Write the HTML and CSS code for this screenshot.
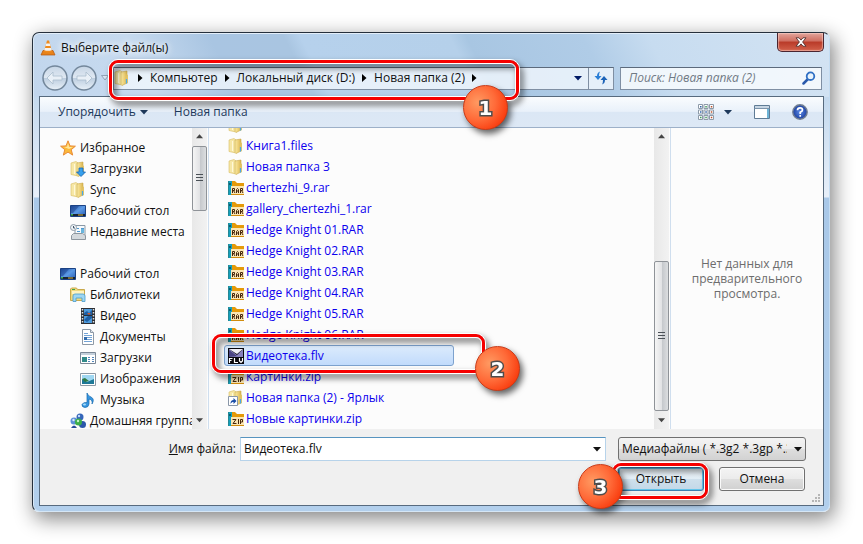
FILE: index.html
```html
<!DOCTYPE html>
<html lang="ru">
<head>
<meta charset="utf-8">
<title>Выберите файл(ы)</title>
<link rel="stylesheet" href="styles.css">
</head>
<body>
<svg class="defs" aria-hidden="true">
  <defs>
    <linearGradient id="gold" x1="0" x2="1" y1="0" y2="0"><stop offset="0" stop-color="#f8e9a4"/><stop offset=".5" stop-color="#eed27a"/><stop offset="1" stop-color="#d9b450"/></linearGradient>
    <linearGradient id="screen" x1="0" x2="1" y1="0" y2="1"><stop offset="0" stop-color="#1d4c9c"/><stop offset=".5" stop-color="#5c9ae6"/><stop offset="1" stop-color="#2459b0"/></linearGradient>
    <linearGradient id="disc" x1="0" x2="0" y1="0" y2="1"><stop offset="0" stop-color="#c6d5e5"/><stop offset=".48" stop-color="#dfe8f2"/><stop offset=".5" stop-color="#bccddf"/><stop offset="1" stop-color="#e9f1f8"/></linearGradient>
    <radialGradient id="help"><stop offset="0" stop-color="#5b8ae8"/><stop offset="1" stop-color="#1c3f9e"/></radialGradient>
  </defs>
  <symbol id="i-folder" viewBox="0 0 16 16">
    <path d="M1 2l5-1.500L8 2v13l-7-1.500z" fill="#f6e7a6" stroke="#d8bc62" stroke-width=".6"/>
    <path d="M7 2l6-1v12l-5 2.500-1-1z" fill="url(#gold)" stroke="#c9a748" stroke-width=".6"/>
    <path d="M4.500 3v10" stroke="#fff8d8" stroke-width="1"/><path d="M12.500 4l1.500 1v8l-2 1v-4z" fill="#e3c568"/><path d="M12.500 9v4.500" stroke="#4aa8ea" stroke-width="1.200"/>
  </symbol>
  <symbol id="i-rar" viewBox="0 0 16 16">
    <path d="M0 1h7l2 2h7v4H0z" fill="#e59a09"/><path d="M0 1h4v14H0z" fill="#149fbc"/><path d="M0 1v14" stroke="#46604c" stroke-width=".7"/><circle cx="2" cy="4" r="1" fill="#0a4a5c"/>
    <path d="M3 6h13v9H3z" fill="#fbe6b4"/><path d="M3 14.500h13" stroke="#d08c0e"/>
    <path d="M4.500 13V8.500h2v2h-2m1 0l1.500 2.500M8.500 13V9.500l1-1 1 1V13m-2-2h2M12.500 13V8.500h2v2h-2m1 0l1.500 2.500" fill="none" stroke="#46260c" stroke-width="1"/>
  </symbol>
  <symbol id="i-zip" viewBox="0 0 16 16">
    <path d="M0 1h7l2 2h7v4H0z" fill="#e59a09"/><path d="M0 1h4v14H0z" fill="#149fbc"/><path d="M0 1v14" stroke="#46604c" stroke-width=".7"/><circle cx="2" cy="4" r="1" fill="#0a4a5c"/>
    <path d="M3 6h13v9H3z" fill="#fbe6b4"/><path d="M3 14.500h13" stroke="#d08c0e"/>
    <path d="M4.500 8.500H8L5 12.500h3.500M10.500 8v5M12.500 13V8.500h2V11h-2" fill="none" stroke="#46260c" stroke-width="1"/>
  </symbol>
  <symbol id="i-flv" viewBox="0 0 16 16">
    <path d="M0 0h16v16H0z" fill="#08070d"/><path d="M1 1l8 6 6-6v8H1z" fill="#8781bd"/><path d="M1 1h14L9 6z" fill="#f0eff8"/><path d="M1 2l8 6-8 1z" fill="#4a4484"/>
    <path d="M1.500 15v-4.500h3M1.500 12.500h2M6.500 10v4.500H10M11.500 10v3l1.500 1.500 1.500-1.500v-3" fill="none" stroke="#fff" stroke-width="1.200"/>
  </symbol>
  <symbol id="i-link" viewBox="0 0 16 16">
    <use href="#i-folder"/><path d="M.5 6.500h9v9h-9z" fill="#fff" stroke="#8a97a8"/><path d="M2.500 14c0-3 1-4 3-4V8l3 3-3 3v-2c-1.500 0-2 .5-3 2z" fill="#1c4fa8"/>
  </symbol>
  <symbol id="i-download" viewBox="0 0 16 16">
    <use href="#i-folder"/><path d="M9 7h4v4h2.500L11 15.500 6.500 11H9z" fill="#37a0ec" stroke="#1766b4" stroke-width=".8"/>
  </symbol>
  <symbol id="i-star" viewBox="0 0 16 16">
    <path d="M8 .8l2 5.100 5.400.3-4.200 3.500 1.500 5.400L8 12.100l-4.700 3 1.500-5.400L.6 6.200 6 5.900z" fill="#fbb93a" stroke="#e88a35" stroke-linejoin="round"/><path d="M8 3l1.200 4H13L9 9l-5-2 3-.2z" fill="#ffe69b"/>
  </symbol>
  <symbol id="i-desktop" viewBox="0 0 16 16">
    <path d="M.5 2.500h15v11H.5z" fill="url(#screen)" stroke="#1b4284"/><path d="M1 11h14v2H1z" fill="#1a2433"/><path d="M1 11h2v1.500H1z" fill="#3fb04d"/><path d="M8 12h5" stroke="#d7b23c"/><path d="M1 3l8 0-6 7H1z" fill="#1b3f8c" opacity=".5"/>
  </symbol>
  <symbol id="i-recent" viewBox="0 0 16 16">
    <path d="M5 1.500h10v10H5z" fill="#f6fafd" stroke="#8b99a6"/><path d="M7 4.500h2m2 0h3M7 7.500h3" stroke="#4f97cf"/><path d="M11 5h3v4h-3z" fill="#69b6de"/>
    <path d="M1.500 11.500l2-2h9l3 2v4h-14z" fill="#d4d9dd" stroke="#8e979f"/><circle cx="3.500" cy="3.500" r="3" fill="#eef3f7" stroke="#919da8"/><path d="M3.500 2v2H5" stroke="#415468" fill="none"/>
  </symbol>
  <symbol id="i-library" viewBox="0 0 16 16">
    <path d="M.5 2l1-1h5l1 1.500h7v11H.5z" fill="#f1d97f" stroke="#c9a94c"/><path d="M2 4h12v3H2z" fill="#fff3c0"/><path d="M2 2.500h3" stroke="#3ea24a"/><path d="M3 14.500V9q0-2 2-2h8q2 0 2 2v5.500h-3V11H6v3.500z" fill="#9ed6f2" stroke="#4a9ccc" stroke-width=".8"/>
  </symbol>
  <symbol id="i-video" viewBox="0 0 16 16">
    <path d="M1 0h14v16H1z" fill="#2d2f34"/><path d="M4 1h8v6H4zM4 8h8v7H4z" fill="#4e9bdc"/><path d="M4 5l3-2 2 2 3-3v5H4zM4 12l3 2 5-4v-2H8z" fill="#1d5fa5"/><path d="M7 5l2 2 2-2z" fill="#c95934"/><path d="M2.500 1v14M13.500 1v14" stroke="#dfe3e8" stroke-width="1.500" stroke-dasharray="1.500 1.500"/>
  </symbol>
  <symbol id="i-doc" viewBox="0 0 16 16">
    <path d="M2.500.5h8l3 3v12h-11z" fill="#fff" stroke="#8d99a6"/><path d="M10.500.5v3h3" fill="#dde5ed" stroke="#8d99a6"/><path d="M4 4.500h4m-4 2h8m-5 2h5m-5 2h5m-8 2h8" stroke="#74a4d6"/><path d="M4 8h3v3H4z" fill="#316bad"/>
  </symbol>
  <symbol id="i-window" viewBox="0 0 16 16">
    <path d="M.5 2.500h15v11H.5z" fill="#fff" stroke="#7a8796"/><path d="M1 3h14v2H1z" fill="#c4d0db"/><path d="M2 7h5v5H2z" fill="#318a89"/><path d="M8 7.500h2m-2 2h2m-2 2h2m2-4h2m-2 2h2m-2 2h2" stroke="#5286bc"/>
  </symbol>
  <symbol id="i-image" viewBox="0 0 16 16">
    <path d="M.5 2.500h15v12H.5z" fill="#fff" stroke="#8c99a5"/><path d="M2 4h12v9H2z" fill="#9fd7f2"/><path d="M2 8l5 3 7-3v5H2z" fill="#1d7897"/><path d="M2 8l3-1 4 3-4 1z" fill="#317a45"/>
  </symbol>
  <symbol id="i-music" viewBox="0 0 16 16">
    <path d="M7 1q1 3 4 4 4 2 1 7 1-4-3-5v5q-.5 3.500-4 3.500-3.500-.5-3-3 1-2.500 5-2z" fill="#3796e0" stroke="#1668ad" stroke-width=".7"/><ellipse cx="4.500" cy="12.500" rx="1.500" ry="1" fill="#a6dcfa"/>
  </symbol>
  <symbol id="i-group" viewBox="0 0 16 16">
    <circle cx="10" cy="4" r="3.500" fill="#3566ba"/><circle cx="4" cy="8" r="3.500" fill="#5b91d8"/><circle cx="12.500" cy="11.500" r="3.500" fill="#2c58aa"/><circle cx="8.500" cy="9" r="3.500" fill="#3cae4a"/><path d="M1 15q3-5 6 0z" fill="#244a99"/><circle cx="9" cy="3" r="1.200" fill="#c1dcf8"/><circle cx="3.500" cy="7" r="1.200" fill="#d8eafa"/><circle cx="8" cy="8" r="1.200" fill="#c8f3c9"/>
  </symbol>
  <symbol id="i-down" viewBox="0 0 8 5"><path d="M0 0h8L4 4.500z" fill="currentColor"/></symbol>
  <symbol id="i-up" viewBox="0 0 8 5"><path d="M0 4.500h8L4 0z" fill="currentColor"/></symbol>
  <symbol id="i-right" viewBox="0 0 5 8"><path d="M0 0v8l4.500-4z" fill="currentColor"/></symbol>
</svg>

<main class="window">
  <header class="titlebar">
    <svg class="cone" viewBox="0 0 16 16"><path d="M3 10.500h10l2 4.500H1z" fill="#e88219" stroke="#b4560d" stroke-width=".7"/><path d="M7 .5h2l3 11q-4 2-8 0z" fill="#f08a1c"/><path d="M6.200 3.500h3.600l.7 2.500h-5zM4.900 8h6.200l.6 2.200q-3.700 1.200-7.400 0z" fill="#f6f3ef"/></svg>
    <h1>Выберите файл(ы)</h1>
    <button class="close" aria-label="Закрыть"><svg viewBox="0 0 12 10"><path d="M1 .8h3l2 2.300 2-2.300h3L7.600 5 11 9.200H8L6 6.900 4 9.200H1L4.400 5z" fill="#fff" stroke="#54302e" stroke-width=".9"/></svg></button>
  </header>

  <nav class="navbar" aria-label="Адрес">
    <div class="history">
      <button aria-label="Назад"><svg viewBox="0 0 26 26"><circle cx="13" cy="13" r="12" fill="url(#disc)" stroke="#73879b" stroke-width="1.500"/><path d="M5 13l6-6v4h9v4h-9v4z" fill="#e9f0f7" stroke="#aabccd" stroke-width=".8"/></svg></button>
      <button aria-label="Вперед"><svg viewBox="0 0 26 26"><circle cx="13" cy="13" r="12" fill="url(#disc)" stroke="#73879b" stroke-width="1.500"/><path d="M21 13l-6-6v4H6v4h9v4z" fill="#e9f0f7" stroke="#aabccd" stroke-width=".8"/></svg></button>
      <svg class="recent" viewBox="0 0 8 6"><path d="M.5.500h7L4 5z" fill="#dbe7f3" stroke="#8195aa" stroke-width=".8"/></svg>
    </div>
    <div class="address">
      <svg class="icon"><use href="#i-folder"/></svg>
      <svg class="sep"><use href="#i-right"/></svg><a href="#pc">Компьютер</a>
      <svg class="sep"><use href="#i-right"/></svg><a href="#d">Локальный диск (D:)</a>
      <svg class="sep"><use href="#i-right"/></svg><a href="#folder">Новая папка (2)</a>
      <svg class="sep"><use href="#i-right"/></svg>
      <button class="drop" aria-label="Предыдущие расположения"><svg class="caret"><use href="#i-down"/></svg></button>
      <button class="refresh" aria-label="Обновить"><svg viewBox="0 0 14 14"><path d="M6 .5Q3 1.500 3 5H.5L4 9l3.500-4H5q0-3 1-4.500z" fill="#2b7fd6"/><path d="M8 13.500q3-1 3-4.500h2.500L10 5 6.500 9H9q0 3-1 4.500z" fill="#1c63b8"/></svg></button>
    </div>
    <div class="search">
      <input type="text" placeholder="Поиск: Новая папка (2)" aria-label="Поиск">
      <svg viewBox="0 0 14 14"><path d="M6 8l-4.500 4.500" stroke="#2a59ab" stroke-width="2.500" stroke-linecap="round"/><circle cx="8.500" cy="5.200" r="3.800" fill="#e8f3fc" stroke="#2f6fc4" stroke-width="1.800"/></svg>
    </div>
  </nav>

  <section class="client">
    <div class="toolbar">
      <button>Упорядочить <svg class="caret"><use href="#i-down"/></svg></button>
      <button>Новая папка</button>
      <span class="spacer"></span>
      <button class="view" aria-label="Вид"><svg class="icon" viewBox="0 0 16 16"><g fill="#fff" stroke="#8d9aa8"><path d="M.5.500h4v4h-4zM6 .5h4v4H6zM11.500.500h4v4h-4zM.5 6h4v4h-4zM6 6h4v4H6zM11.500 6h4v4h-4zM.5 11.500h4v4h-4zM6 11.500h4v4H6zM11.500 11.500h4v4h-4z"/></g><path d="M2 2h1.500v1.500H2zM7.300 7.300h1.500v1.500H7.300zM2 7.300h1.500v1.500H2z" fill="#2d62a8"/><path d="M7.300 2h1.500v1.500H7.300zM2 12.800h1.500v1.500H2zM7.300 12.800h1.500v1.500H7.300z" fill="#3b9b58"/><path d="M12.800 2h1.500v1.500h-1.500zM12.800 7.300h1.500v1.500h-1.500zM12.800 12.800h1.500v1.500h-1.500z" fill="#b9502c"/></svg><svg class="caret"><use href="#i-down"/></svg></button>
      <button aria-label="Область просмотра"><svg class="icon" viewBox="0 0 16 16"><path d="M.5 1.500h15v13H.5z" fill="#fff" stroke="#5f7b95"/><path d="M1 2h14v2H1z" fill="#c6d5e3"/><path d="M.5 4.500h15" stroke="#7b93aa"/><path d="M13 5h2v9h-2z" fill="#6eb4d6"/></svg></button>
      <button aria-label="Справка"><svg class="icon" viewBox="0 0 16 16"><circle cx="8" cy="8" r="7.200" fill="url(#help)" stroke="#727f92" stroke-width="1.400"/><path d="M5.500 6.300q0-2.500 2.500-2.500t2.500 2.100Q10.500 7.200 8.200 8.300V10M8.200 11v1.700" fill="none" stroke="#fff" stroke-width="1.700"/></svg></button>
    </div>

    <div class="panes">
      <ul class="tree">
        <li><a href="#fav"><svg class="icon"><use href="#i-star"/></svg>Избранное</a></li>
        <li class="l1"><a href="#dl"><svg class="icon"><use href="#i-download"/></svg>Загрузки</a></li>
        <li class="l1"><a href="#sync"><svg class="icon"><use href="#i-folder"/></svg>Sync</a></li>
        <li class="l1"><a href="#desk"><svg class="icon"><use href="#i-desktop"/></svg>Рабочий стол</a></li>
        <li class="l1"><a href="#recent"><svg class="icon"><use href="#i-recent"/></svg>Недавние места</a></li>
        <li class="group"><a href="#desktop"><svg class="icon"><use href="#i-desktop"/></svg>Рабочий стол</a></li>
        <li class="l1"><a href="#lib"><svg class="icon"><use href="#i-library"/></svg>Библиотеки</a></li>
        <li class="l2"><a href="#video"><svg class="icon"><use href="#i-video"/></svg>Видео</a></li>
        <li class="l2"><a href="#docs"><svg class="icon"><use href="#i-doc"/></svg>Документы</a></li>
        <li class="l2"><a href="#downloads"><svg class="icon"><use href="#i-window"/></svg>Загрузки</a></li>
        <li class="l2"><a href="#images"><svg class="icon"><use href="#i-image"/></svg>Изображения</a></li>
        <li class="l2"><a href="#music"><svg class="icon"><use href="#i-music"/></svg>Музыка</a></li>
        <li class="l1"><a href="#home"><svg class="icon"><use href="#i-group"/></svg>Домашняя группа</a></li>
      </ul>
      <div class="scrollbar"><svg class="arrow"><use href="#i-up"/></svg><div class="track"><div class="thumb"></div></div><svg class="arrow"><use href="#i-down"/></svg></div>

      <div class="files">
        <ul>
          <li><a href="#f0" aria-label="Папка"><svg class="icon"><use href="#i-folder"/></svg></a></li>
          <li><a href="#f1"><svg class="icon"><use href="#i-folder"/></svg>Книга1.files</a></li>
          <li><a href="#f2"><svg class="icon"><use href="#i-folder"/></svg>Новая папка 3</a></li>
          <li><a href="#f3"><svg class="icon"><use href="#i-rar"/></svg>chertezhi_9.rar</a></li>
          <li><a href="#f4"><svg class="icon"><use href="#i-rar"/></svg>gallery_chertezhi_1.rar</a></li>
          <li><a href="#f5"><svg class="icon"><use href="#i-rar"/></svg>Hedge Knight 01.RAR</a></li>
          <li><a href="#f6"><svg class="icon"><use href="#i-rar"/></svg>Hedge Knight 02.RAR</a></li>
          <li><a href="#f7"><svg class="icon"><use href="#i-rar"/></svg>Hedge Knight 03.RAR</a></li>
          <li><a href="#f8"><svg class="icon"><use href="#i-rar"/></svg>Hedge Knight 04.RAR</a></li>
          <li><a href="#f9"><svg class="icon"><use href="#i-rar"/></svg>Hedge Knight 05.RAR</a></li>
          <li><a href="#f10"><svg class="icon"><use href="#i-rar"/></svg>Hedge Knight 06.RAR</a></li>
          <li class="selected"><a href="#f11"><svg class="icon"><use href="#i-flv"/></svg>Видеотека.flv</a></li>
          <li><a href="#f12"><svg class="icon"><use href="#i-zip"/></svg>Картинки.zip</a></li>
          <li><a href="#f13"><svg class="icon"><use href="#i-link"/></svg>Новая папка (2) - Ярлык</a></li>
          <li><a href="#f14"><svg class="icon"><use href="#i-zip"/></svg>Новые картинки.zip</a></li>
        </ul>
      </div>
      <div class="scrollbar low"><svg class="arrow"><use href="#i-up"/></svg><div class="track"><div class="thumb"></div></div><svg class="arrow"><use href="#i-down"/></svg></div>

      <p class="preview">Нет данных для предварительного просмотра.</p>
    </div>

    <form class="footer">
      <label for="name"><u>И</u>мя файла:</label>
      <div class="combo"><input id="name" type="text" value="Видеотека.flv"><svg class="caret"><use href="#i-down"/></svg></div>
      <div class="filter"><select aria-label="Тип файлов"><option>Медиафайлы ( *.3g2 *.3gp *.3gp2 *.3gpp *.amv)</option></select><svg class="caret"><use href="#i-down"/></svg></div>
      <div class="actions">
        <button type="button" class="primary">Открыть</button>
        <button type="button">Отмена</button>
      </div>
      <svg class="grip" viewBox="0 0 9 9"><path d="M7 1h2M4 4h2M7 4h2M1 7h2M4 7h2M7 7h2" stroke="#b5b5b5" stroke-width="2"/></svg>
    </form>
  </section>

  <div class="mark mark-path"><span>1</span></div>
  <div class="mark mark-file"><span>2</span></div>
  <div class="mark mark-open"><span>3</span></div>
</main>
</body>
</html>
```

FILE: styles.css
```css
* { box-sizing: border-box; }

body {
  margin: 0;
  min-height: 100vh;
  padding: 32px 33px 33px 32px;
  display: flex;
  background: #fff;
  font: 12px/16px "Open Sans", "Noto Sans", sans-serif;
  color: #111;
}

.defs { position: absolute; width: 0; height: 0; }

ul, h1, p { margin: 0; padding: 0; list-style: none; }
a { color: inherit; text-decoration: none; }
button, input, select { font: inherit; color: inherit; margin: 0; }
button { border: 0; padding: 0; background: none; }
svg { flex: none; display: block; }

.icon { width: 16px; height: 16px; }
.caret { width: 8px; height: 5px; }
.sep { width: 5px; height: 8px; }

.window {
  position: relative;
  flex: 1;
  min-width: 0;
  display: flex;
  flex-direction: column;
  padding: 0 5px 5px 6px;
  border: 1px solid #26303c;
  border-right-color: #c4dcf2;
  border-bottom-color: #d5e6f5;
  border-radius: 7px;
  background:
    linear-gradient(63deg, #c2d6ed 0, #c6daef 15%, #a9c5e2 25%, #a9c5e1 34%, #b6d1ec 36%, #b5d0ea 54%, #a8c6e2 56%, #b0cce7 70%, #c7dcf0 78%, #d3e3f3 100%) top / 100% 64px no-repeat,
    linear-gradient(#c4d9ee 64px, #e7eff9 164px, #a9c8e8 165px, #b2cfec 100%);
  box-shadow: inset 0 1px #e3eef9, inset 1px 0 #d9e8f6, 3px 6px 20px 1px rgba(0, 0, 0, .48);
}

.titlebar { display: flex; align-items: center; height: 29px; gap: 5px; padding-left: 1px; }
.titlebar h1 { flex: 1; font-size: 12px; font-weight: 400; text-shadow: 0 0 6px #fff, 0 0 8px #fff; }
.cone { width: 16px; height: 16px; }

.close {
  align-self: flex-start;
  display: grid;
  place-items: center;
  width: 47px;
  height: 19px;
  border: 1px solid #4a2530;
  border-top: 0;
  border-radius: 0 0 5px 5px;
  background: linear-gradient(#e2a49b, #cf6e60 45%, #b93a28 50%, #d2614b);
  box-shadow: inset 0 0 1px 1px rgba(255, 225, 215, .5);
}
.close svg { width: 12px; height: 10px; }

.navbar { display: flex; align-items: center; height: 34px; padding: 0 2px 2px 3px; }
.history { display: flex; align-items: center; gap: 3px; width: 71px; }
.history button svg { width: 26px; height: 26px; }
.recent { width: 8px; height: 6px; margin-left: 1px; }

.address, .search {
  display: flex;
  align-items: center;
  height: 23px;
  border: 1px solid #7f8fa3;
  border-top-color: #5c6a7c;
  background: rgba(240, 246, 252, .82);
}
.address { flex: 1; min-width: 0; }
.address .sep { margin: 0 7px; color: #000; }
.address .icon { margin-right: 1px; }
.drop { margin-left: auto; width: 20px; height: 100%; display: grid; place-items: center; color: #001a66; }
.refresh { width: 25px; height: 100%; display: grid; place-items: center; border-left: 1px solid #7f8fa3; }
.refresh svg { width: 14px; height: 14px; }
.search { width: 202px; margin-left: 6px; padding-right: 5px; background: rgba(245, 249, 253, .9); }
.search input { flex: 1; min-width: 0; border: 0; padding: 0 0 0 8px; background: none; outline: 0; }
.search input::placeholder { color: #707a85; font-style: italic; opacity: 1; }
.search svg { width: 14px; height: 14px; }

.client {
  flex: 1;
  min-height: 0;
  display: flex;
  flex-direction: column;
  border: 1px solid #576a7e;
  background: #f0f0f0;
}

.toolbar {
  display: flex;
  align-items: center;
  gap: 22px;
  height: 31px;
  padding: 0 15px 0 18px;
  border-bottom: 1px solid #9db0c8;
  background: linear-gradient(#fafcfe, #e9f1fa 48%, #dbe7f5 50%, #dde8f5);
  color: #1e395b;
}
.toolbar button { display: flex; align-items: center; gap: 4px; }
.toolbar button:first-child { margin-right: 4px; }
.toolbar .view { gap: 10px; }
.spacer { flex: 1; }

.panes { flex: 1; min-height: 0; display: flex; overflow: hidden; background: #fcfcfc; }

.tree { width: 152px; padding: 9px 0 0 20px; margin-bottom: -2px; }
.tree a, .files a { display: flex; align-items: center; gap: 4px; height: 21px; white-space: nowrap; }
.tree .l1 { padding-left: 10px; }
.tree .l2 { padding-left: 20px; }
.tree .group { margin-top: 21px; }

.scrollbar {
  display: flex;
  flex-direction: column;
  align-items: center;
  width: 17px;
  padding: 6px 1px 6px 0;
  border-right: 1px solid #cfdeee;
  background: linear-gradient(to right, #e8e8e8, #f2f2f2 15px, #fcfcfc 15px);
  color: #444;
  z-index: 1;
}
.arrow { width: 7px; height: 5px; }
.track { flex: 1; width: 15px; display: flex; flex-direction: column; padding: 7px 0; }
.low .track { justify-content: flex-end; }
.thumb {
  height: 65px;
  border: 1px solid #8f9398;
  border-radius: 2px;
  background:
    repeating-linear-gradient(#4b5157 0 1px, transparent 1px 3px) center / 7px 9px no-repeat,
    linear-gradient(to right, #f5f5f5, #e2e3e5 50%, #c5c8cc 55%, #dcdee0);
}
.low .thumb { height: 150px; }

/* The list is scrolled to its end, so the first row is half hidden */
.files { flex: 1; min-width: 0; overflow: hidden; }
.files ul { margin-top: -14px; }
.files li { width: 230px; margin-left: 15px; color: #0c00ee; }
.files a { gap: 2px; padding: 0 3px; border: 1px solid transparent; border-radius: 3px; }
.files .selected a { border-color: #7da2ce; background: linear-gradient(#dcebfc, #c1dbfc); }

.preview { width: 152px; align-self: center; padding: 0 14px; text-align: center; line-height: 15px; color: #6d6d6d; }

.footer {
  position: relative;
  display: grid;
  grid-template-columns: 196px 1fr 188px;
  column-gap: 4px;
  row-gap: 6px;
  align-content: start;
  align-items: center;
  padding: 8px 17px 14px 0;
}
.footer label { text-align: right; }
.combo, .filter { display: flex; align-items: center; position: relative; height: 24px; }
.combo { margin-right: 8px; border: 1px solid #b7d3ea; border-top-color: #5794bf; background: #fff; }
.combo input { flex: 1; min-width: 0; border: 0; padding: 0 0 0 3px; background: none; outline: 0; }
.combo .caret { margin-right: 4px; }
.filter select {
  appearance: none;
  width: 100%;
  height: 24px;
  padding: 0 18px 0 3px;
  border: 1px solid #707070;
  border-radius: 3px;
  background: linear-gradient(#f4f4f4, #ebebeb 49%, #dedede 50%, #d2d2d2);
}
.filter .caret { position: absolute; right: 4px; pointer-events: none; }

.actions { grid-column: 3; display: flex; gap: 15px; }
.actions button {
  width: 86px;
  height: 24px;
  border: 1px solid #707070;
  border-radius: 3px;
  background: linear-gradient(#f4f4f4, #ebebeb 49%, #dedede 50%, #d0d0d0);
  box-shadow: inset 0 0 0 1px #fafafa;
}
.actions .primary {
  border-color: #3c7fb1;
  background: linear-gradient(#eef5fa, #e2eef6 49%, #cfe0ec 50%, #c3d8e8);
  box-shadow: inset 0 0 0 1px #62c4ea;
}
.grip { position: absolute; right: 3px; bottom: 2px; width: 9px; height: 9px; }

/* Numbered callouts laid over the dialog */
.mark { position: absolute; z-index: 2; pointer-events: none; border: 1px solid #fff; border-radius: 10px; filter: drop-shadow(3px 4px 3px rgba(0, 0, 0, .6)); }
.mark::before { content: ""; position: absolute; inset: 0; border: 3px solid #f60000; border-radius: 9px; }
.mark::after { content: ""; position: absolute; inset: 3px; border: 1px solid #fff; border-radius: 6px; }
.mark span {
  position: absolute;
  z-index: 1;
  display: grid;
  place-items: center;
  width: 45px;
  height: 45px;
  border: 1px solid #c93a17;
  border-radius: 50%;
  background: radial-gradient(circle at 32% 38%, #ff9a62, #ff6a38 45%, #f93a0c 80%);
  color: #fff;
  font: bold 20px/24px "DejaVu Sans", sans-serif;
  -webkit-text-stroke: 3px #4d4d4d;
  paint-order: stroke fill;
}
.mark-path { left: 75px; top: 26px; width: 412px; height: 42px; }
.mark-path span { right: 11px; bottom: -30px; }
.mark-file { left: 178px; top: 300px; width: 275px; height: 41px; }
.mark-file span { right: -35px; bottom: -18px; }
.mark-open { right: 120px; bottom: 11px; width: 98px; height: 38px; }
.mark-open span { left: -34px; bottom: -10px; }
```
